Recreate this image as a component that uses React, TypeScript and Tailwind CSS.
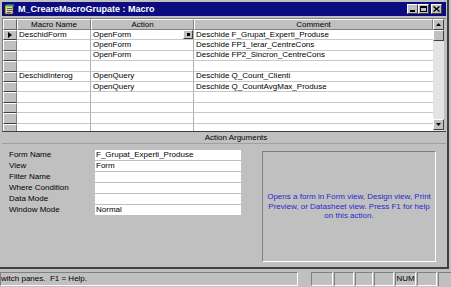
import React from "react";

const rows: { name: string; action: string; comment: string }[] = [
  { name: "DeschidForm", action: "OpenForm", comment: "Deschide F_Grupat_Experti_Produse" },
  { name: "", action: "OpenForm", comment: "Deschide FP1_Ierar_CentreCons" },
  { name: "", action: "OpenForm", comment: "Deschide FP2_Sincron_CentreCons" },
  { name: "", action: "", comment: "" },
  { name: "DeschidInterog", action: "OpenQuery", comment: "Deschide Q_Count_Clienti" },
  { name: "", action: "OpenQuery", comment: "Deschide Q_CountAvgMax_Produse" },
  { name: "", action: "", comment: "" },
  { name: "", action: "", comment: "" },
  { name: "", action: "", comment: "" },
  { name: "", action: "", comment: "" },
];

const args: [string, string][] = [
  ["Form Name", "F_Grupat_Experti_Produse"],
  ["View", "Form"],
  ["Filter Name", ""],
  ["Where Condition", ""],
  ["Data Mode", ""],
  ["Window Mode", "Normal"],
];

function TitleBtn({ children }: { children: React.ReactNode }) {
  return (
    <div className="w-[11px] h-[10px] bg-[#c0c0c0] border-t border-l border-t-white border-l-white border-r border-b border-r-[#404040] border-b-[#404040] flex items-center justify-center">
      {children}
    </div>
  );
}

function ScrollBtn({ up }: { up: boolean }) {
  return (
    <div className="h-[11px] w-full bg-[#c0c0c0] border-t border-l border-t-white border-l-white border-r border-b border-r-[#404040] border-b-[#404040] flex items-center justify-center">
      <svg width="5" height="3" viewBox="0 0 5 3">
        {up ? <polygon points="2.5,0 5,3 0,3" fill="#000" /> : <polygon points="0,0 5,0 2.5,3" fill="#000" />}
      </svg>
    </div>
  );
}

export default function App() {
  return (
    <div
      className="w-[451px] h-[287px] bg-[#c0c0c0] flex flex-col overflow-hidden text-black"
      style={{ fontFamily: '"Liberation Sans", Arial, sans-serif' }}
    >
      {/* window */}
      <div className="h-[269px] w-[449px] flex flex-col pt-[2px] pl-[2px] pr-[1px] border-r-2 border-b-2 border-r-[#404040] border-b-[#404040]">
        {/* title bar */}
        <div className="h-[14px] bg-[#0c0c80] flex items-center pl-[2px] pr-[4px]">
          <svg width="11" height="11" viewBox="0 0 11 11" className="shrink-0">
            <rect x="1" y="1" width="8" height="9" fill="#e8e070" stroke="#404000" strokeWidth="0.8" />
            <rect x="2" y="0.5" width="8" height="2" rx="1" fill="#30a0a0" />
            <line x1="3" y1="4.5" x2="8" y2="4.5" stroke="#3030a0" strokeWidth="0.8" />
            <line x1="3" y1="6.5" x2="8" y2="6.5" stroke="#3030a0" strokeWidth="0.8" />
            <line x1="3" y1="8.5" x2="7" y2="8.5" stroke="#3030a0" strokeWidth="0.8" />
          </svg>
          <span className="ml-[3px] text-white font-bold text-[9px] leading-none whitespace-nowrap">
            M_CreareMacroGrupate : Macro
          </span>
          <div className="ml-auto flex items-center">
            <TitleBtn>
              <div className="w-[5px] h-[2px] bg-black mt-[4px]" />
            </TitleBtn>
            <TitleBtn>
              <div className="w-[7px] h-[6px] border border-black border-t-2" />
            </TitleBtn>
            <div className="w-[2px]" />
            <TitleBtn>
              <svg width="7" height="6" viewBox="0 0 7 6">
                <path d="M0.5 0.5 L6.5 5.5 M6.5 0.5 L0.5 5.5" stroke="#000" strokeWidth="1.4" />
              </svg>
            </TitleBtn>
          </div>
        </div>

        {/* grid */}
        <div className="mt-[2px] h-[113px] flex border-t border-l border-t-[#808080] border-l-[#808080] overflow-hidden">
          <div className="w-[430px] flex flex-col text-[8px] leading-none">
            {/* header */}
            <div className="h-[11px] flex shrink-0">
              <div className="w-[14px] bg-[#c0c0c0] border-t border-l border-t-white border-l-white border-r border-b border-r-[#606060] border-b-[#606060]" />
              <div className="w-[74px] bg-[#c0c0c0] border-t border-l border-t-white border-l-white border-r border-b border-r-[#808080] border-b-[#808080] flex items-center justify-center">
                Macro Name
              </div>
              <div className="w-[103px] bg-[#c0c0c0] border-t border-l border-t-white border-l-white border-r border-b border-r-[#808080] border-b-[#808080] flex items-center justify-center">
                Action
              </div>
              <div className="w-[239px] bg-[#c0c0c0] border-t border-l border-t-white border-l-white border-r border-b border-r-[#808080] border-b-[#808080] flex items-center justify-center">
                Comment
              </div>
            </div>
            {rows.map((r, i) => (
              <div key={i} className="h-[10.4px] flex shrink-0">
                <div className="w-[14px] bg-[#c0c0c0] border-t border-l border-t-white border-l-white border-r border-b border-r-[#808080] border-b-[#404040] flex items-center justify-center">
                  {i === 0 && (
                    <svg width="4" height="6" viewBox="0 0 4 6">
                      <polygon points="0,0 4,3 0,6" fill="#000" />
                    </svg>
                  )}
                </div>
                <div className="w-[74px] bg-white border-r border-b border-r-[#b0b0b0] border-b-[#c8c8c8] flex items-center pl-[2px] whitespace-nowrap overflow-hidden">
                  {r.name}
                </div>
                <div className="w-[103px] bg-white border-r border-b border-r-[#b0b0b0] border-b-[#c8c8c8] flex items-center pl-[2px] whitespace-nowrap overflow-hidden">
                  {r.action}
                  {i === 0 && (
                    <div className="ml-auto h-full w-[10px] bg-[#c0c0c0] border-t border-l border-t-white border-l-white border-r border-b border-r-[#404040] border-b-[#404040] flex items-center justify-center">
                      <div className="w-[3px] h-[3px] bg-black" />
                    </div>
                  )}
                </div>
                <div className="w-[239px] bg-white border-b border-b-[#c8c8c8] flex items-center pl-[2px] whitespace-nowrap overflow-hidden">
                  {r.comment}
                </div>
              </div>
            ))}
          </div>
          {/* scrollbar */}
          <div className="w-[13px] flex flex-col bg-[#e4e4e4]">
            <ScrollBtn up={true} />
            <div className="h-[11px] w-full bg-[#c0c0c0] border-t border-l border-t-white border-l-white border-r border-b border-r-[#404040] border-b-[#404040]" />
            <div className="flex-1" />
            <ScrollBtn up={false} />
            <div className="h-[1px]" />
          </div>
          <div className="w-[2px] bg-[#c0c0c0]" />
        </div>

        {/* action arguments bar */}
        <div className="h-[13px] flex items-center justify-center text-[8px] leading-none border-t border-t-[#404040] border-b border-b-[#a0a0a0] pl-[24px]">
          Action Arguments
        </div>

        {/* lower pane */}
        <div className="flex-1 flex text-[8px] leading-none">
          <div className="w-[239px] pt-[5px] flex flex-col">
            {args.map(([label, val], i) => (
              <div key={i} className="h-[11px] flex items-center">
                <div className="w-[93px] pl-[7px] whitespace-nowrap">{label}</div>
                <div className="flex-1 h-[10px] bg-white flex items-center pl-[1px] whitespace-nowrap overflow-hidden">
                  {val}
                </div>
              </div>
            ))}
          </div>
          <div className="ml-[21px] mt-[7px] w-[174px] h-[111px] border-t border-l border-t-[#808080] border-l-[#808080] border-r border-b border-r-white border-b-white flex flex-col items-center justify-center text-[#2828d0] leading-[9.5px] whitespace-nowrap">
            <span>Opens a form in Form view, Design view, Print</span>
            <span>Preview, or Datasheet view. Press F1 for help</span>
            <span>on this action.</span>
          </div>
        </div>
      </div>

      {/* status bar */}
      <div className="flex-1 flex items-center text-[8px] leading-none pt-[1px]">
        <div className="w-[298px] h-[14px] border-t border-l border-t-[#808080] border-l-[#808080] border-r border-b border-r-white border-b-white flex items-center whitespace-nowrap overflow-hidden">
          witch panes.&nbsp; F1 = Help.
        </div>
        <div className="w-[12px] h-[14px]" />
        {[22, 20, 18, 20, 21, 20].map((w, i) => (
          <div
            key={i}
            style={{ width: w }}
            className="h-[14px] ml-[1px] border-t border-l border-t-[#808080] border-l-[#808080] border-r border-b border-r-white border-b-white flex items-center justify-center"
          >
            {i === 4 ? "NUM" : ""}
          </div>
        ))}
        <div className="flex-1 h-[14px] ml-[1px] border-t border-l border-t-[#808080] border-l-[#808080]" />
      </div>
    </div>
  );
}
